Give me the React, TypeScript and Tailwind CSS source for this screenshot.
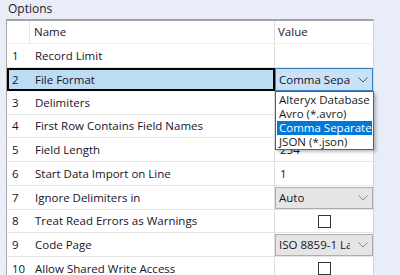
import React from "react";

const Chevron = ({ color }: { color: string }) => (
  <svg width="10" height="6" viewBox="0 0 10 6" className="shrink-0 ml-auto">
    <polyline points="0.5,0.5 5,5 9.5,0.5" fill="none" stroke={color} strokeWidth="1" />
  </svg>
);

const Checkbox = () => (
  <div className="w-[13px] h-[13px] border border-[#333333] bg-white" />
);

type Row = {
  n: number;
  name: string;
  h: string;
  kind: "text" | "combo" | "check" | "sel";
  value?: string;
};

const rows: Row[] = [
  { n: 1, name: "Record Limit", h: "h-[24px]", kind: "text", value: "" },
  { n: 2, name: "File Format", h: "h-[23px]", kind: "sel", value: "Comma Separated Value (*.csv)" },
  { n: 3, name: "Delimiters", h: "h-[24px]", kind: "text", value: "" },
  { n: 4, name: "First Row Contains Field Names", h: "h-[23px]", kind: "text", value: "" },
  { n: 5, name: "Field Length", h: "h-[24px]", kind: "text", value: "254" },
  { n: 6, name: "Start Data Import on Line", h: "h-[24px]", kind: "text", value: "1" },
  { n: 7, name: "Ignore Delimiters in", h: "h-[24px]", kind: "combo", value: "Auto" },
  { n: 8, name: "Treat Read Errors as Warnings", h: "h-[23px]", kind: "check" },
  { n: 9, name: "Code Page", h: "h-[24px]", kind: "combo", value: "ISO 8859-1 Latin I" },
  { n: 10, name: "Allow Shared Write Access", h: "h-[24px]", kind: "check" },
];

export default function App() {
  return (
    <div className="w-[400px] h-[275px] bg-[#e9edf8] overflow-hidden relative font-['Open_Sans',sans-serif] text-[11.5px] text-[#1a1228] leading-none">
      <div className="h-[19px] pl-[8px] pt-[3px] text-[12px] text-[#1a1a1a]">Options</div>
      <div className="ml-[6px] w-[368px] bg-white border-t-2 border-t-[#a3a3a3] border-l border-l-[#a8a8a8] border-r border-r-[#d6d6d6]">
        {/* header */}
        <div className="flex h-[23px] border-b border-[#f0f0f0]">
          <div className="w-[23px] border-r border-[#e6e6e6]" />
          <div className="w-[244px] pl-[4px] flex items-center">Name</div>
          <div className="w-[99px] border-l border-[#dedede] pl-[3px] flex items-center">Value</div>
        </div>
        {rows.map((r) => {
          if (r.kind === "sel") {
            return (
              <div key={r.n} className={`flex ${r.h}`}>
                <div className="w-[268px] border-2 border-black bg-[#bcdcf4] flex items-center">
                  <div className="w-[21px] pl-[3px]">{r.n}</div>
                  <div className="pl-[5px]">{r.name}</div>
                </div>
                <div className="w-[98px] border border-[#3b7fc4] bg-[#c9e1f6] flex items-center pl-[3px] pr-[4px]">
                  <div className="w-[71px] overflow-hidden whitespace-nowrap">{r.value}</div>
                  <Chevron color="#555555" />
                </div>
              </div>
            );
          }
          return (
            <div key={r.n} className={`flex ${r.h} border-b border-[#e4e4e4]`}>
              <div className="w-[23px] pl-[5px] flex items-center">{r.n}</div>
              <div className="w-[244px] pl-[5px] flex items-center whitespace-nowrap overflow-hidden">{r.name}</div>
              <div className="w-[99px] border-l border-[#dedede] flex items-center">
                {r.kind === "text" && <div className="pl-[5px]">{r.value}</div>}
                {r.kind === "check" && (
                  <div className="w-full flex justify-center">
                    <Checkbox />
                  </div>
                )}
                {r.kind === "combo" && (
                  <div className="w-[98px] h-[22px] border border-[#adadad] bg-[#e5e5e5] flex items-center pl-[3px] pr-[4px]">
                    <div className="w-[71px] overflow-hidden whitespace-nowrap">{r.value}</div>
                    <Chevron color="#8a8a8a" />
                  </div>
                )}
              </div>
            </div>
          );
        })}
      </div>
      {/* dropdown popup */}
      <div className="absolute left-[275px] top-[91px] w-[99px] bg-white border border-[#0078d7] shadow-[2px_2px_3px_rgba(0,0,0,0.25)] pt-[1px] px-[1px]">
        {["Alteryx Database", "Avro (*.avro)", "Comma Separated Value (*.csv)", "JSON (*.json)"].map((t, i) => (
          <div
            key={t}
            className={`h-[14px] pl-[2px] flex items-center whitespace-nowrap overflow-hidden ${i === 2 ? "bg-[#0078d7] text-white" : "text-[#1a1a1a]"}`}
          >
            {t}
          </div>
        ))}
      </div>
    </div>
  );
}
